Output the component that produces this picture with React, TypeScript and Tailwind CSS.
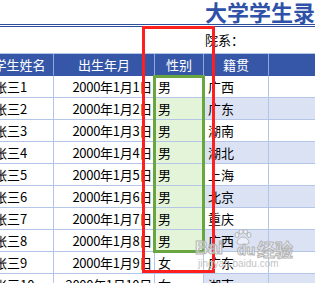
import React from 'react';

// 一行学生数据
interface Student {
  name: string;
  birth: string;
  gender: string;
  place: string;
}

const students: Student[] = [
  { name: '张三1', birth: '2000年1月1日', gender: '男', place: '广西' },
  { name: '张三2', birth: '2000年1月2日', gender: '男', place: '广东' },
  { name: '张三3', birth: '2000年1月3日', gender: '男', place: '湖南' },
  { name: '张三4', birth: '2000年1月4日', gender: '男', place: '湖北' },
  { name: '张三5', birth: '2000年1月5日', gender: '男', place: '上海' },
  { name: '张三6', birth: '2000年1月6日', gender: '男', place: '北京' },
  { name: '张三7', birth: '2000年1月7日', gender: '男', place: '重庆' },
  { name: '张三8', birth: '2000年1月8日', gender: '男', place: '广西' },
  { name: '张三9', birth: '2000年1月9日', gender: '女', place: '广东' },
  { name: '张三10', birth: '2000年1月10日', gender: '女', place: '湖南' },
];

const cell = 'h-[22px] shrink-0 border-r border-b border-[#b4c6e7] flex items-center overflow-hidden whitespace-nowrap';

// 水印文字样式：白色填充 + 灰色描边
const wm: React.CSSProperties = { WebkitTextStroke: '1px #b4b4b4', color: 'rgba(255,255,255,0.45)' };

const App: React.FC = () => {
  return (
    <div
      className="relative w-[315px] h-[283px] overflow-hidden bg-white text-black"
      style={{ fontFamily: '"Noto Sans CJK SC", "Noto Sans", sans-serif' }}
    >
      {/* 标题 */}
      <div className="h-6 pl-[205px] flex items-start overflow-hidden whitespace-nowrap">
        <span className="text-[22px] leading-[22px] font-bold text-[#2f52a8]">大学学生录取名单</span>
      </div>
      <div className="h-[3px] border-y border-[#2f4f9e]" />
      <div className="h-[26px] pl-[205px] flex items-center text-[13px]">院系：</div>

      {/* 表格 */}
      <div className="ml-[-14px] w-[344px] text-[13px] leading-none">
        <div className="flex bg-[#3657a7] text-white border-t border-[#b4c6e7]">
          <div className={`${cell} w-[68px] justify-center border-r-[#8ea9db] border-b-[#3657a7]`}>学生姓名</div>
          <div className={`${cell} w-[101px] justify-center border-r-[#8ea9db] border-b-[#3657a7]`}>出生年月</div>
          <div className={`${cell} w-[49px] justify-center border-r-[#8ea9db] border-b-[#3657a7]`}>性别</div>
          <div className={`${cell} w-[65px] justify-center border-r-[#8ea9db] border-b-[#3657a7]`}>籍贯</div>
          <div className={`${cell} w-[61px] border-b-[#3657a7]`} />
        </div>
        {students.map((s, i) => {
          const even = i % 2 === 1;
          const band = even ? 'bg-[#dae2f4]' : 'bg-white';
          const green = i >= 1 && i <= 7;
          return (
            <div key={s.name} className="flex">
              <div className={`${cell} w-[68px] pl-[8px]`}>{s.name}</div>
              <div className={`${cell} w-[101px] justify-end pr-[2px] tracking-[-0.3px]`}>{s.birth}</div>
              <div className={`${cell} w-[49px] pl-[3px] ${green ? 'bg-[#e3f4d9]' : 'bg-white'}`}>{s.gender}</div>
              <div className={`${cell} w-[65px] pl-[4px] ${band}`}>{s.place}</div>
              <div className={`${cell} w-[61px] ${band}`} />
            </div>
          );
        })}
      </div>

      {/* 绿色选框 */}
      <div className="absolute left-[153px] top-[75px] w-[52px] h-[178px] border-[3px] border-[#6aa63f]" />
      {/* 红色标注框 */}
      <div className="absolute left-[142px] top-[26px] w-[73px] h-[247px] border-[3px] border-[#ff1f1f]" />

      {/* 百度经验水印 */}
      <div className="absolute left-[195px] top-[229px] w-[110px] h-[40px] pointer-events-none whitespace-nowrap">
        <span
          className="absolute left-0 top-[10px] text-[18px] leading-none font-bold"
          style={{ ...wm, fontFamily: '"Liberation Sans", sans-serif' }}
        >
          Bai
        </span>
        <svg width="20" height="17" viewBox="0 0 20 17" className="absolute left-[38px] top-0">
          <g fill="rgba(255,255,255,0.45)" stroke="#b4b4b4" strokeWidth="1">
            <ellipse cx="4" cy="6" rx="2" ry="2.5" />
            <ellipse cx="8" cy="2.8" rx="2" ry="2.3" />
            <ellipse cx="12.5" cy="2.8" rx="2" ry="2.3" />
            <ellipse cx="16" cy="6" rx="2" ry="2.5" />
            <path d="M4 14 C4 10 8 8 10 8 C12 8 16 10 16 14 C14 16.5 6 16.5 4 14 Z" />
          </g>
        </svg>
        <span
          className="absolute left-[42px] top-[13px] text-[15px] leading-none font-bold"
          style={{ ...wm, fontFamily: '"Liberation Sans", sans-serif' }}
        >
          du
        </span>
        <span
          className="absolute left-[62px] top-[11px] text-[18px] leading-none font-bold"
          style={{ ...wm, fontFamily: '"Noto Sans CJK SC", sans-serif' }}
        >
          经验
        </span>
        <span
          className="absolute left-[3px] top-[30px] text-[10px] leading-none text-[#c4c4c4]"
          style={{ fontFamily: '"Liberation Sans", sans-serif' }}
        >
          jingyan.baidu.com
        </span>
      </div>
    </div>
  );
};

export default App;
